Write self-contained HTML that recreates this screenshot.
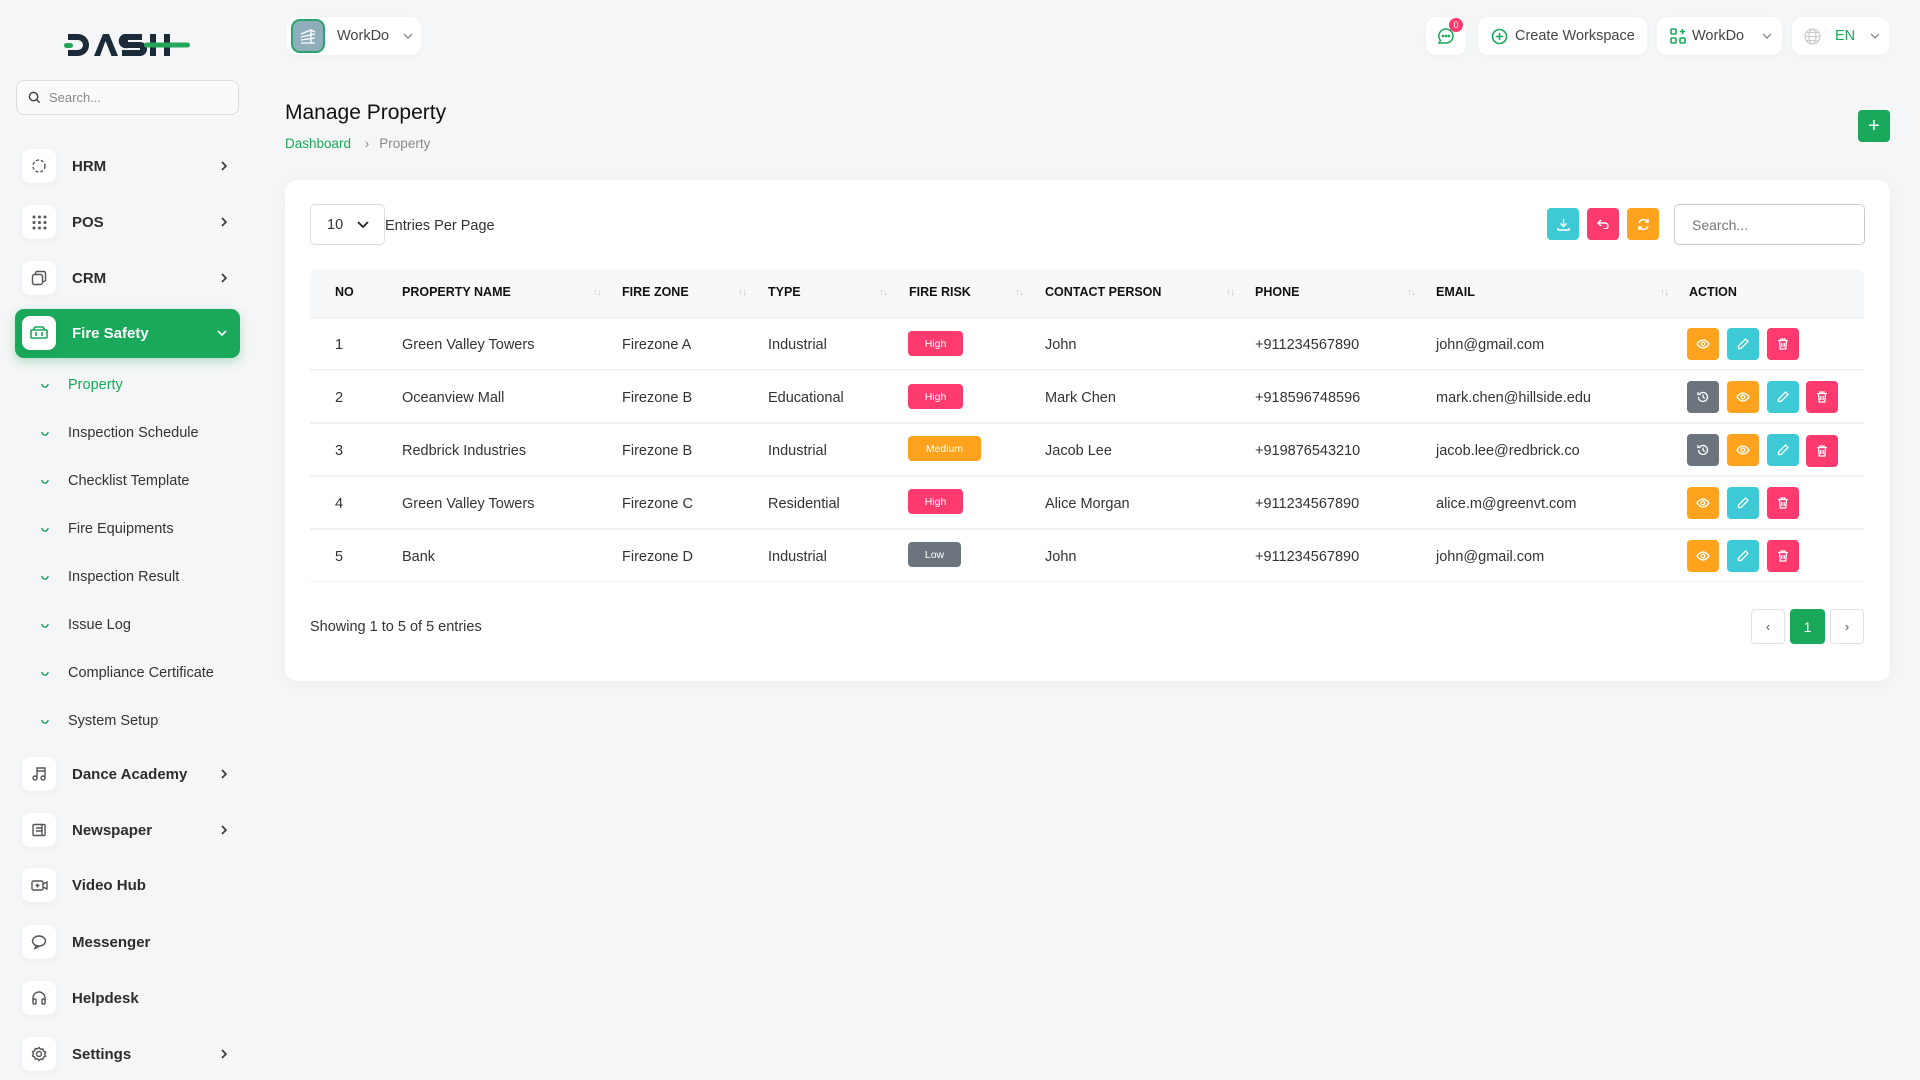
<!DOCTYPE html>
<html><head><meta charset="utf-8">
<style>
*{box-sizing:border-box;margin:0;padding:0}
body{width:1920px;height:1080px;overflow:hidden;background:#f5f6f7;font-family:"Liberation Sans",sans-serif;color:#333;position:relative}
.a{position:absolute}
.ib{width:34px;height:34px;border-radius:8px;background:#fff;box-shadow:0 2px 8px rgba(0,0,0,.04);display:flex;align-items:center;justify-content:center;flex:none}
.mi{left:22px;height:34px;display:flex;align-items:center;width:206px}
.mi .t{margin-left:16px;font-size:15px;font-weight:bold;color:#2d2d2d;flex:1}
.sub{left:40px;font-size:14.5px;color:#333;display:flex;align-items:center}
.sub svg{margin-right:18px}
.hb{background:#fff;border-radius:10px;height:38px;top:17px;display:flex;align-items:center;font-size:14.5px;color:#444;box-shadow:0 1px 6px rgba(0,0,0,.03)}
.card{left:285px;top:180px;width:1605px;height:501px;background:#fff;border-radius:12px;box-shadow:0 3px 18px rgba(0,0,0,.04)}
.th{font-size:12.5px;font-weight:bold;color:#111;top:285px}
.srt{font-size:9px;color:#bbb;top:287px}
.td{font-size:14.5px;color:#333}
.bd{height:25px;border-radius:4px;color:#fff;font-size:10.5px;display:flex;align-items:center;justify-content:center}
.ab{width:32px;height:32px;border-radius:4px;display:flex;align-items:center;justify-content:center}
.line{left:310px;width:1554px;height:2px;background:#f1f2f4}
</style></head><body>
<svg width="0" height="0" style="position:absolute"><defs>
<symbol id="chev" viewBox="0 0 8 12"><path d="M2 2l4 4-4 4" fill="none" stroke="#333" stroke-width="1.6"/></symbol>
<symbol id="bul" viewBox="0 0 10 10"><path d="M2 4a3 3 0 1 0 6 0" fill="none" stroke="#2aa565" stroke-width="1.6"/></symbol>
<symbol id="eye" viewBox="0 0 14 14"><path d="M1 7s2.5-4 6-4 6 4 6 4-2.5 4-6 4-6-4-6-4z" fill="none" stroke="#fff" stroke-width="1.3"/><circle cx="7" cy="7" r="1.8" fill="none" stroke="#fff" stroke-width="1.3"/></symbol>
<symbol id="pen" viewBox="0 0 14 14"><path d="M9.5 2l2.5 2.5-7 7H2.5V9z" fill="none" stroke="#fff" stroke-width="1.3"/></symbol>
<symbol id="del" viewBox="0 0 14 14"><path d="M2 3.5h10M5 3.5V2h4v1.5M3.5 3.5l.7 8.5h5.6l.7-8.5M5.8 6v4M8.2 6v4" fill="none" stroke="#fff" stroke-width="1.3"/></symbol>
<symbol id="his" viewBox="0 0 14 14"><path d="M2.5 7a4.5 4.5 0 1 0 1.3-3.2M2 2v2.5h2.5M7 4.5V7l1.8 1.5" fill="none" stroke="#fff" stroke-width="1.3"/></symbol>
</defs></svg>
<!-- logo -->
<svg class="a" style="left:64px;top:30px" width="128" height="30" viewBox="0 0 128 30">
<g fill="#1c2b3a">
<path d="M4 4h10a11 11 0 0 1 0 22H4v-6h10a5 5 0 0 0 0-10H4z"/>
<path d="M30 26l9-22h6l9 22h-6.5L41.5 11 36 26z"/>
<path d="M60 4h18v6H64v2h12a7 7 0 0 1 0 14H58v-6h18v-2H64a7 7 0 0 1-4-14z"/>
<rect x="86" y="4" width="6" height="22"/><rect x="100" y="4" width="6" height="22"/>
</g>
<rect x="0" y="13" width="9" height="5" rx="2.5" fill="#23a85b"/>
<rect x="80" y="12.5" width="46" height="5" rx="2.5" fill="#23a85b"/>
</svg>
<div class="a" style="left:16px;top:80px;width:223px;height:35px;border:1px solid #ddd;border-radius:8px;background:#fafafa;display:flex;align-items:center;padding-left:11px;font-size:13px;color:#888">
<svg width="13" height="13" viewBox="0 0 14 14"><circle cx="6" cy="6" r="4.5" stroke="#444" stroke-width="1.6" fill="none"/><path d="M9.5 9.5l3 3" stroke="#444" stroke-width="1.6"/></svg><span style="margin-left:8px">Search...</span></div>

<div class="a mi" style="top:149px"><div class="ib"><svg width="16" height="16" viewBox="0 0 16 16" fill="none" stroke="#555" stroke-width="1.4" stroke-dasharray="3 2"><circle cx="8" cy="8" r="6"/></svg></div><span class="t">HRM</span><svg width="8" height="12"><use href="#chev"/></svg></div>
<div class="a mi" style="top:205px"><div class="ib"><svg width="15" height="15" viewBox="0 0 15 15" fill="#555"><circle cx="2" cy="2" r="1.5"/><circle cx="7.5" cy="2" r="1.5"/><circle cx="13" cy="2" r="1.5"/><circle cx="2" cy="7.5" r="1.5"/><circle cx="7.5" cy="7.5" r="1.5"/><circle cx="13" cy="7.5" r="1.5"/><circle cx="2" cy="13" r="1.5"/><circle cx="7.5" cy="13" r="1.5"/><circle cx="13" cy="13" r="1.5"/></svg></div><span class="t">POS</span><svg width="8" height="12"><use href="#chev"/></svg></div>
<div class="a mi" style="top:261px"><div class="ib"><svg width="16" height="16" viewBox="0 0 16 16" fill="none" stroke="#555" stroke-width="1.4"><rect x="1.5" y="4.5" width="10" height="10" rx="2"/><path d="M4.5 4.5V3a1.5 1.5 0 0 1 1.5-1.5h7A1.5 1.5 0 0 1 14.5 3v7a1.5 1.5 0 0 1-1.5 1.5h-1.5"/></svg></div><span class="t">CRM</span><svg width="8" height="12"><use href="#chev"/></svg></div>

<div class="a" style="left:15px;top:309px;width:225px;height:49px;background:#1aa85a;border-radius:9px;box-shadow:0 4px 10px rgba(26,168,90,.3)"></div>
<div class="a mi" style="top:316px;left:22px"><div class="ib"><svg width="18" height="14" viewBox="0 0 18 14" fill="none" stroke="#1aa85a" stroke-width="1.6"><rect x="1" y="4" width="16" height="8" rx="1"/><path d="M3 4l2-3h8l2 3M6 6v4M12 6v4"/></svg></div><span class="t" style="color:#fff">Fire Safety</span><svg width="12" height="8" viewBox="0 0 12 8"><path d="M2 2l4 4 4-4" fill="none" stroke="#fff" stroke-width="1.6"/></svg></div>

<div class="a sub" style="top:377px;color:#1aa85a"><svg width="10" height="10"><use href="#bul"/></svg>Property</div>
<div class="a sub" style="top:425px"><svg width="10" height="10"><use href="#bul"/></svg>Inspection Schedule</div>
<div class="a sub" style="top:473px"><svg width="10" height="10"><use href="#bul"/></svg>Checklist Template</div>
<div class="a sub" style="top:521px"><svg width="10" height="10"><use href="#bul"/></svg>Fire Equipments</div>
<div class="a sub" style="top:569px"><svg width="10" height="10"><use href="#bul"/></svg>Inspection Result</div>
<div class="a sub" style="top:617px"><svg width="10" height="10"><use href="#bul"/></svg>Issue Log</div>
<div class="a sub" style="top:665px"><svg width="10" height="10"><use href="#bul"/></svg>Compliance Certificate</div>
<div class="a sub" style="top:713px"><svg width="10" height="10"><use href="#bul"/></svg>System Setup</div>

<div class="a mi" style="top:757px"><div class="ib"><svg width="16" height="16" viewBox="0 0 16 16" fill="none" stroke="#555" stroke-width="1.4"><circle cx="4" cy="12" r="2"/><circle cx="12" cy="12" r="2"/><path d="M6 12V2h8v10M6 5h8"/></svg></div><span class="t">Dance Academy</span><svg width="8" height="12"><use href="#chev"/></svg></div>
<div class="a mi" style="top:813px"><div class="ib"><svg width="16" height="16" viewBox="0 0 16 16" fill="none" stroke="#555" stroke-width="1.4"><rect x="2" y="2.5" width="12" height="11" rx="1"/><path d="M5 6h6M5 9h6M11 2.5v11"/></svg></div><span class="t">Newspaper</span><svg width="8" height="12"><use href="#chev"/></svg></div>
<div class="a mi" style="top:868px"><div class="ib"><svg width="17" height="14" viewBox="0 0 17 14" fill="none" stroke="#555" stroke-width="1.4"><rect x="1" y="3" width="11" height="9" rx="1.5"/><path d="M12 6l4-2v7l-4-2M4.5 7.5h4M6.5 5.5v4"/></svg></div><span class="t">Video Hub</span></div>
<div class="a mi" style="top:925px"><div class="ib"><svg width="16" height="16" viewBox="0 0 16 16" fill="none" stroke="#555" stroke-width="1.4"><ellipse cx="8" cy="7" rx="6.5" ry="5"/><path d="M5 11.5l-1 3 4-2"/></svg></div><span class="t">Messenger</span></div>
<div class="a mi" style="top:981px"><div class="ib"><svg width="16" height="16" viewBox="0 0 16 16" fill="none" stroke="#555" stroke-width="1.4"><path d="M2 11V8a6 6 0 0 1 12 0v3"/><rect x="2" y="9" width="3" height="5" rx="1"/><rect x="11" y="9" width="3" height="5" rx="1"/></svg></div><span class="t">Helpdesk</span></div>
<div class="a mi" style="top:1037px"><div class="ib"><svg width="16" height="16" viewBox="0 0 16 16" fill="none" stroke="#555" stroke-width="1.4"><circle cx="8" cy="8" r="2.5"/><path d="M8 1.5l1.5 1.8 2.3-.4.6 2.2 2.1 1-.9 2.1.9 2.1-2.1 1-.6 2.2-2.3-.4L8 14.5l-1.5-1.8-2.3.4-.6-2.2-2.1-1 .9-2.1-.9-2.1 2.1-1 .6-2.2 2.3.4z"/></svg></div><span class="t">Settings</span><svg width="8" height="12"><use href="#chev"/></svg></div>

<!-- header -->
<div class="a hb" style="left:287px;width:134px;padding-left:4px"><div style="width:34px;height:34px;border-radius:9px;background:#8eaebb;border:2px solid #27a36b;display:flex;align-items:center;justify-content:center"><svg width="18" height="16" viewBox="0 0 18 16" fill="none" stroke="#fff" stroke-width="1.3"><path d="M2 6l10-4 4 2M2 9l14-3M2 12l14-2M2 15h14M12 2v13"/></svg></div><span style="margin-left:12px">WorkDo</span><svg style="margin-left:14px" width="10" height="6" viewBox="0 0 10 6"><path d="M1 1l4 4 4-4" fill="none" stroke="#777" stroke-width="1.2"/></svg></div>

<div class="a hb" style="left:1426px;width:40px;justify-content:center"><svg width="18" height="18" viewBox="0 0 18 18" fill="none" stroke="#1aa85a" stroke-width="1.5"><path d="M9 2a7 7 0 0 1 0 14H2l1.5-2.5A7 7 0 0 1 9 2z"/><circle cx="6" cy="9" r=".6" fill="#1aa85a"/><circle cx="9" cy="9" r=".6" fill="#1aa85a"/><circle cx="12" cy="9" r=".6" fill="#1aa85a"/></svg></div>
<div class="a" style="left:1449px;top:18px;width:14px;height:14px;border-radius:50%;background:#ff3a6e;color:#fff;font-size:9px;display:flex;align-items:center;justify-content:center">0</div>
<div class="a hb" style="left:1478px;width:169px;padding-left:13px"><svg width="17" height="17" viewBox="0 0 17 17" fill="none" stroke="#1aa85a" stroke-width="1.6"><circle cx="8.5" cy="8.5" r="7"/><path d="M8.5 5v7M5 8.5h7"/></svg><span style="margin-left:7px">Create Workspace</span></div>
<div class="a hb" style="left:1657px;width:125px;padding-left:13px"><svg width="16" height="16" viewBox="0 0 16 16" fill="none" stroke="#1aa85a" stroke-width="1.6"><rect x="1" y="1" width="5" height="5" rx="1"/><rect x="1" y="10" width="5" height="5" rx="1"/><rect x="10" y="10" width="5" height="5" rx="1"/><path d="M12.5 1v5M10 3.5h5"/></svg><span style="margin-left:6px">WorkDo</span><svg style="margin-left:18px" width="10" height="6" viewBox="0 0 10 6"><path d="M1 1l4 4 4-4" fill="none" stroke="#777" stroke-width="1.2"/></svg></div>
<div class="a hb" style="left:1792px;width:97px;padding-left:12px"><svg width="17" height="17" viewBox="0 0 17 17" fill="none" stroke="#ccc" stroke-width="1.2"><circle cx="8.5" cy="8.5" r="7.5"/><ellipse cx="8.5" cy="8.5" rx="3.5" ry="7.5"/><path d="M1 8.5h15M2.5 4.5h12M2.5 12.5h12"/></svg><span style="margin-left:14px;color:#1aa85a">EN</span><svg style="margin-left:15px" width="10" height="6" viewBox="0 0 10 6"><path d="M1 1l4 4 4-4" fill="none" stroke="#777" stroke-width="1.2"/></svg></div>

<div class="a" style="left:285px;top:101px;font-size:21px;color:#111">Manage Property</div>
<div class="a" style="left:285px;top:136px;font-size:13.5px;color:#1aa85a">Dashboard <span style="color:#888;margin:0 10px">&#8250;</span><span style="color:#888">Property</span></div>
<div class="a" style="left:1858px;top:110px;width:32px;height:32px;border-radius:4px;background:#1aa85a;color:#fff;font-size:20px;display:flex;align-items:center;justify-content:center">+</div>

<div class="a card"></div>
<div class="a" style="left:310px;top:204px;width:75px;height:41px;border:1px solid #ddd;border-radius:5px;display:flex;align-items:center;padding-left:16px;font-size:14.5px">10<svg style="margin-left:14px" width="12" height="8" viewBox="0 0 12 8"><path d="M1 1l5 5 5-5" stroke="#222" stroke-width="1.8" fill="none"/></svg></div>
<div class="a" style="left:385px;top:218px;font-size:14.5px">Entries Per Page</div>
<div class="a ab" style="left:1547px;top:208px;background:#3ec9d6"><svg width="13" height="13" viewBox="0 0 13 13" fill="none" stroke="#fff" stroke-width="1.4"><path d="M6.5 1v7M3.5 5.5l3 3 3-3M1 10v2h11v-2"/></svg></div>
<div class="a ab" style="left:1587px;top:208px;background:#ff3a6e"><svg width="12" height="10" viewBox="0 0 12 10" fill="none" stroke="#fff" stroke-width="1.4"><path d="M4 1L1 4l3 3M1 4h7a3 3 0 0 1 0 6H6"/></svg></div>
<div class="a ab" style="left:1627px;top:208px;background:#ffa21d"><svg width="13" height="13" viewBox="0 0 13 13" fill="none" stroke="#fff" stroke-width="1.5"><path d="M2 5a5 5 0 0 1 9-1M11 8a5 5 0 0 1-9 1M11 1v3H8M2 12V9h3"/></svg></div>
<div class="a" style="left:1674px;top:204px;width:191px;height:41px;border:1px solid #ccc;border-radius:5px;padding-left:17px;display:flex;align-items:center;font-size:14px;color:#777">Search...</div>

<div class="a" style="left:310px;top:269px;width:1554px;height:48px;background:#f6f8fa;border-radius:6px 6px 0 0"></div>
<div class="a th" style="left:335px">NO</div>
<div class="a th" style="left:402px">PROPERTY NAME</div><div class="a srt" style="left:593px">↑↓</div>
<div class="a th" style="left:622px">FIRE ZONE</div><div class="a srt" style="left:738px">↑↓</div>
<div class="a th" style="left:768px">TYPE</div><div class="a srt" style="left:879px">↑↓</div>
<div class="a th" style="left:909px">FIRE RISK</div><div class="a srt" style="left:1015px">↑↓</div>
<div class="a th" style="left:1045px">CONTACT PERSON</div><div class="a srt" style="left:1226px">↑↓</div>
<div class="a th" style="left:1255px">PHONE</div><div class="a srt" style="left:1407px">↑↓</div>
<div class="a th" style="left:1436px">EMAIL</div><div class="a srt" style="left:1660px">↑↓</div>
<div class="a th" style="left:1689px">ACTION</div>

<div class="a line" style="top:317px"></div>
<div class="a line" style="top:369px"></div>
<div class="a line" style="top:422px"></div>
<div class="a line" style="top:475px"></div>
<div class="a line" style="top:528px"></div>
<div class="a line" style="top:581px;height:1px"></div>

<div class="a td" style="left:335px;top:337px">1</div><div class="a td" style="left:402px;top:337px">Green Valley Towers</div><div class="a td" style="left:622px;top:337px">Firezone A</div><div class="a td" style="left:768px;top:337px">Industrial</div><div class="a bd" style="left:908px;top:331px;width:55px;background:#ff3a6e">High</div><div class="a td" style="left:1045px;top:337px">John</div><div class="a td" style="left:1255px;top:337px">+911234567890</div><div class="a td" style="left:1436px;top:337px">john@gmail.com</div>
<div class="a td" style="left:335px;top:390px">2</div><div class="a td" style="left:402px;top:390px">Oceanview Mall</div><div class="a td" style="left:622px;top:390px">Firezone B</div><div class="a td" style="left:768px;top:390px">Educational</div><div class="a bd" style="left:908px;top:384px;width:55px;background:#ff3a6e">High</div><div class="a td" style="left:1045px;top:390px">Mark Chen</div><div class="a td" style="left:1255px;top:390px">+918596748596</div><div class="a td" style="left:1436px;top:390px">mark.chen@hillside.edu</div>
<div class="a td" style="left:335px;top:443px">3</div><div class="a td" style="left:402px;top:443px">Redbrick Industries</div><div class="a td" style="left:622px;top:443px">Firezone B</div><div class="a td" style="left:768px;top:443px">Industrial</div><div class="a bd" style="left:908px;top:436px;width:73px;background:#ffa21d">Medium</div><div class="a td" style="left:1045px;top:443px">Jacob Lee</div><div class="a td" style="left:1255px;top:443px">+919876543210</div><div class="a td" style="left:1436px;top:443px">jacob.lee@redbrick.co</div>
<div class="a td" style="left:335px;top:496px">4</div><div class="a td" style="left:402px;top:496px">Green Valley Towers</div><div class="a td" style="left:622px;top:496px">Firezone C</div><div class="a td" style="left:768px;top:496px">Residential</div><div class="a bd" style="left:908px;top:489px;width:55px;background:#ff3a6e">High</div><div class="a td" style="left:1045px;top:496px">Alice Morgan</div><div class="a td" style="left:1255px;top:496px">+911234567890</div><div class="a td" style="left:1436px;top:496px">alice.m@greenvt.com</div>
<div class="a td" style="left:335px;top:549px">5</div><div class="a td" style="left:402px;top:549px">Bank</div><div class="a td" style="left:622px;top:549px">Firezone D</div><div class="a td" style="left:768px;top:549px">Industrial</div><div class="a bd" style="left:908px;top:542px;width:53px;background:#6c757d">Low</div><div class="a td" style="left:1045px;top:549px">John</div><div class="a td" style="left:1255px;top:549px">+911234567890</div><div class="a td" style="left:1436px;top:549px">john@gmail.com</div>

<div class="a ab" style="left:1687px;top:328px;background:#ffa21d"><svg width="14" height="14"><use href="#eye"/></svg></div><div class="a ab" style="left:1727px;top:328px;background:#3ec9d6"><svg width="14" height="14"><use href="#pen"/></svg></div><div class="a ab" style="left:1767px;top:328px;background:#ff3a6e"><svg width="14" height="14"><use href="#del"/></svg></div>

<div class="a ab" style="left:1687px;top:381px;background:#6c757d"><svg width="14" height="14"><use href="#his"/></svg></div><div class="a ab" style="left:1727px;top:381px;background:#ffa21d"><svg width="14" height="14"><use href="#eye"/></svg></div><div class="a ab" style="left:1767px;top:381px;background:#3ec9d6"><svg width="14" height="14"><use href="#pen"/></svg></div><div class="a ab" style="left:1806px;top:381px;background:#ff3a6e"><svg width="14" height="14"><use href="#del"/></svg></div>

<div class="a ab" style="left:1687px;top:434px;background:#6c757d"><svg width="14" height="14"><use href="#his"/></svg></div><div class="a ab" style="left:1727px;top:434px;background:#ffa21d"><svg width="14" height="14"><use href="#eye"/></svg></div><div class="a ab" style="left:1767px;top:434px;background:#3ec9d6"><svg width="14" height="14"><use href="#pen"/></svg></div><div class="a ab" style="left:1806px;top:435px;background:#ff3a6e"><svg width="14" height="14"><use href="#del"/></svg></div>

<div class="a ab" style="left:1687px;top:487px;background:#ffa21d"><svg width="14" height="14"><use href="#eye"/></svg></div><div class="a ab" style="left:1727px;top:487px;background:#3ec9d6"><svg width="14" height="14"><use href="#pen"/></svg></div><div class="a ab" style="left:1767px;top:487px;background:#ff3a6e"><svg width="14" height="14"><use href="#del"/></svg></div>

<div class="a ab" style="left:1687px;top:540px;background:#ffa21d"><svg width="14" height="14"><use href="#eye"/></svg></div><div class="a ab" style="left:1727px;top:540px;background:#3ec9d6"><svg width="14" height="14"><use href="#pen"/></svg></div><div class="a ab" style="left:1767px;top:540px;background:#ff3a6e"><svg width="14" height="14"><use href="#del"/></svg></div>

<div class="a td" style="left:310px;top:619px">Showing 1 to 5 of 5 entries</div>
<div class="a" style="left:1751px;top:609px;width:34px;height:35px;border:1px solid #e3e3e3;border-radius:4px;display:flex;align-items:center;justify-content:center;color:#555;font-size:13px">&#8249;</div>
<div class="a" style="left:1790px;top:609px;width:35px;height:35px;background:#1aa85a;border-radius:4px;display:flex;align-items:center;justify-content:center;color:#fff;font-size:14px">1</div>
<div class="a" style="left:1830px;top:609px;width:34px;height:35px;border:1px solid #e3e3e3;border-radius:4px;display:flex;align-items:center;justify-content:center;color:#555;font-size:13px">&#8250;</div>
</body></html>
